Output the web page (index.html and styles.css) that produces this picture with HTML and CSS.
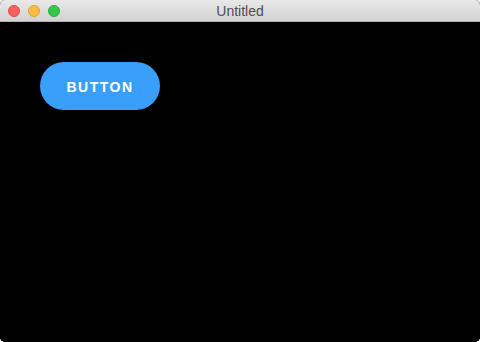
FILE: index.html
```html
<!DOCTYPE html>
<html>
<head>
<meta charset="utf-8">
<link rel="stylesheet" href="styles.css">
</head>
<body>
<div class="window">
  <div class="titlebar">
    <div class="lights">
      <span class="light red"></span>
      <span class="light yellow"></span>
      <span class="light green"></span>
    </div>
    <div class="title">Untitled</div>
  </div>
  <div class="content">
    <button class="btn">BUTTON</button>
  </div>
</div>
</body>
</html>
```
FILE: styles.css
```css
html, body {
  margin: 0;
  padding: 0;
  background: #ffffff;
  width: 480px;
  height: 342px;
  overflow: hidden;
}
.window {
  width: 480px;
  height: 342px;
  display: flex;
  flex-direction: column;
  border-radius: 5px;
  overflow: hidden;
  background: #000;
}
.titlebar {
  height: 21px;
  flex: none;
  position: relative;
  display: flex;
  align-items: center;
  justify-content: center;
  background: linear-gradient(#e8e8e8, #d3d3d3);
  border-bottom: 1px solid #b1b1b1;
}
.lights {
  position: absolute;
  left: 8px;
  top: 5px;
  display: flex;
  gap: 8px;
}
.light {
  width: 12px;
  height: 12px;
  border-radius: 50%;
  box-sizing: border-box;
}
.red { background: #fc605c; border: 1px solid #de4a45; }
.yellow { background: #fdbc40; border: 1px solid #dea033; }
.green { background: #34c84a; border: 1px solid #27aa35; }
.title {
  font-family: "Helvetica Neue", "Liberation Sans", Arial, sans-serif;
  font-size: 14px;
  color: #4d4d4d;
  padding-top: 1px;
}
.content {
  flex: 1;
  background: #000;
  padding: 40px 0 0 40px;
}
.btn {
  width: 120px;
  height: 48px;
  border: none;
  border-radius: 24px;
  background: #3a9ffb;
  color: #fff;
  font-family: "Liberation Sans", Arial, sans-serif;
  font-weight: bold;
  font-size: 14px;
  letter-spacing: 1.5px;
  padding: 2px 0 0 0;
  display: block;
}
```
